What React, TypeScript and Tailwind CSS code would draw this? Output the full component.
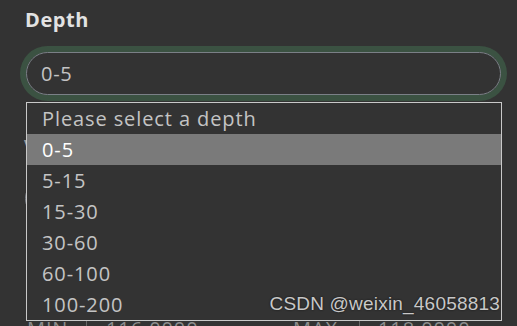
import { useState } from "react"

const depths = ["0-5", "5-15", "15-30", "30-60", "60-100", "100-200"]

export default function App() {
  const [selected, setSelected] = useState("0-5")

  return (
    <div
      className="relative w-[517px] h-[326px] overflow-hidden bg-[#333333] text-[#c4c4c4]"
      style={{ fontFamily: '"Open Sans", "Noto Sans", sans-serif' }}
    >
      <div className="pl-[26px] pr-[16px] pt-[6px]">
        <label className="block -ml-[1px] text-[20px] leading-[28px] font-bold tracking-[0.6px] text-[#e2e2e2]">Depth</label>

        <div className="mt-[18px] h-[43px] w-[475px] flex items-center rounded-full border border-[#7b8087] ring-[6px] ring-[#3b5242] pl-[14px] text-[20px] tracking-[0.7px] text-[#c4c4c4]">
          {selected}
        </div>

        {/* content hidden behind the open list */}
        <div className="mt-[38px] -ml-[2px] text-[20px] leading-[28px] font-bold text-[#9a9a9a]">Variable</div>
        <div className="mt-[16px] -ml-[1px] h-[43px] w-[475px] rounded-full border border-[#7b8087]" />

        <div className="mt-[95px] flex items-center text-[20px] leading-[28px] tracking-[0.9px] text-[#8c8c8c]">
          <span className="w-[60px] pl-[1px]">MIN</span>
          <span className="h-[24px] w-px bg-[#666]" />
          <span className="w-[206px] pl-[19px]">116.0000</span>
          <span className="w-[66px]">MAX</span>
          <span className="h-[24px] w-px bg-[#666]" />
          <span className="pl-[18px]">118.0000</span>
        </div>
      </div>

      <ul className="absolute left-[26px] top-[102px] w-[476px] h-[219px] border border-[#c9c9c9] bg-[#333333] text-[20px] leading-[31px] tracking-[0.9px]">
        <li className="h-[31px] pl-[15px] text-[#c4c4c4]">Please select a depth</li>
        {depths.map((d) => (
          <li
            key={d}
            onClick={() => setSelected(d)}
            className={
              d === selected
                ? "h-[31px] pl-[15px] bg-[#7a7a7a] text-white"
                : "h-[31px] pl-[15px] text-[#c4c4c4]"
            }
          >
            {d}
          </li>
        ))}
      </ul>

      <div
        className="absolute right-[17px] top-[292px] text-[19px] leading-[24px] tracking-[0.2px] text-[#c8c8c8] [text-shadow:0_0_2px_#111]"
        style={{ fontFamily: '"Liberation Sans", Arial, sans-serif' }}
      >
        CSDN @weixin_46058813
      </div>
    </div>
  )
}
